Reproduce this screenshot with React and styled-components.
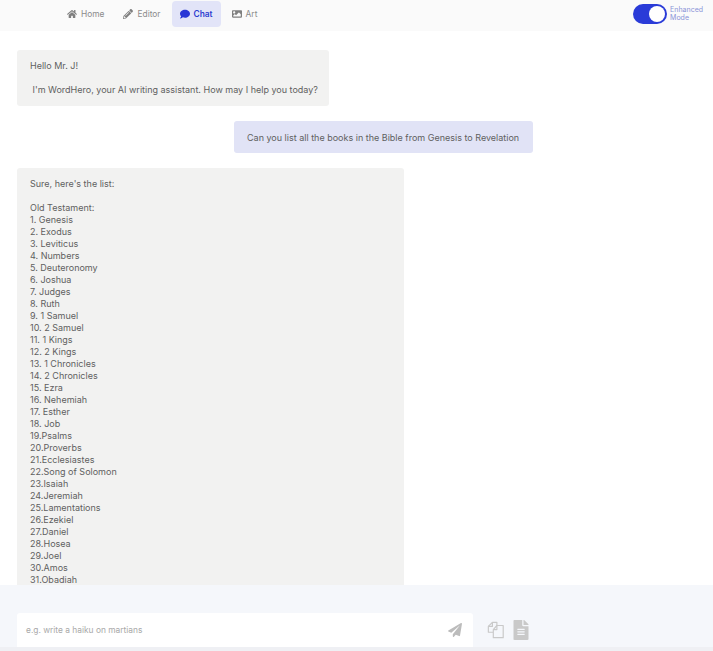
import React from 'react';
import styled, { createGlobalStyle } from 'styled-components';
import { FaHome, FaPencilAlt, FaComment, FaImage, FaPaperPlane, FaFileAlt } from 'react-icons/fa';

const GlobalStyle = createGlobalStyle`
    html, body {
        margin: 0;
        height: 100%;
        background: #ffffff;
        font-family: Inter, "Liberation Sans", sans-serif;
    }
    #root {
        height: 100%;
    }
`

const Page = styled.div`
    display: flex;
    flex-direction: column;
    height: 651px;
    overflow: hidden;
`

const Nav = styled.nav`
    display: flex;
    align-items: flex-start;
    justify-content: space-between;
    flex: none;
    height: 31px;
    padding: 1px 10px 0 59px;
    box-sizing: border-box;
    background: #fafafa;
`

const Tabs = styled.div`
    display: flex;
    gap: 3px;
`

const Tab = styled.a`
    display: flex;
    align-items: center;
    gap: 4px;
    height: 26px;
    padding: 0 8px;
    border-radius: 4px;
    background: ${props => (props.$active ? '#e2e4f8' : 'transparent')};
    color: ${props => (props.$active ? '#2f3fd0' : '#8b8b8b')};
    font-size: 8.4px;
    font-weight: ${props => (props.$active ? 600 : 400)};
    svg {
        width: 10px;
        height: 10px;
        color: ${props => (props.$active ? '#2836d6' : '#7f7f7f')};
    }
`

const Mode = styled.div`
    display: flex;
    align-items: center;
    gap: 3px;
    height: 26px;
`

const Switch = styled.div`
    display: flex;
    align-items: center;
    justify-content: flex-end;
    width: 34px;
    height: 20px;
    padding: 2px;
    box-sizing: border-box;
    border-radius: 10px;
    background: #2a3bd8;
`

const Knob = styled.span`
    width: 16px;
    height: 16px;
    border-radius: 50%;
    background: #ffffff;
`

const ModeLabel = styled.span`
    color: #8a93d8;
    font-size: 7px;
    line-height: 8px;
`

const Chat = styled.main`
    display: flex;
    flex-direction: column;
    align-items: flex-start;
    gap: 15px;
    flex: 1;
    min-height: 0;
    overflow: hidden;
    padding: 19px 0 0 17px;
`

const Bubble = styled.div`
    flex: none;
    box-sizing: border-box;
    width: ${props => props.$width}px;
    margin-left: ${props => props.$offset || 0}px;
    padding: ${props => (props.$user ? '11px 8px 9px 13px' : '10px 8px 10px 13px')};
    border-radius: 3px;
    background: ${props => (props.$user ? '#e1e3f6' : '#f2f2f1')};
    color: #5f5f5f;
    font-size: 9px;
    line-height: 12px;
    white-space: pre-wrap;
`

const Footer = styled.footer`
    display: flex;
    align-items: flex-start;
    gap: 14px;
    flex: none;
    height: 66px;
    padding: 28px 0 0 17px;
    box-sizing: border-box;
    background: #f5f7fb;
    border-bottom: 4px solid #eff0f4;
`

const InputBox = styled.div`
    display: flex;
    align-items: center;
    justify-content: space-between;
    width: 456px;
    height: 34px;
    padding: 0 11px 0 9px;
    box-sizing: border-box;
    border-radius: 3px 3px 0 0;
    background: #ffffff;
    color: #a9a9a9;
    font-size: 8.4px;
    svg {
        width: 14px;
        height: 14px;
        color: #bcbcbc;
    }
`

const FileActions = styled.div`
    display: flex;
    align-items: center;
    gap: 8px;
    height: 34px;
    color: #c9c9c9;
    svg {
        height: 20px;
    }
`

const CopyIcon = () => (
    <svg viewBox="0 0 20 20" width="18" fill="none" stroke="currentColor" strokeWidth="1.3" strokeLinejoin="round">
        <path d="M7 12.5H1.5V6L6 1.5H11V5" />
        <path d="M6 1.5V6H1.5" />
        <path d="M7 18.5V9.5L11 5H18V18.5Z" fill="#f5f7fb" />
        <path d="M11 5V9.5H7" />
    </svg>
)

const greeting = `Hello Mr. J!

 I'm WordHero, your AI writing assistant. How may I help you today?`

const books = `Sure, here's the list:

Old Testament:
1. Genesis
2. Exodus
3. Leviticus
4. Numbers
5. Deuteronomy
6. Joshua
7. Judges
8. Ruth
9. 1 Samuel
10. 2 Samuel
11. 1 Kings
12. 2 Kings
13. 1 Chronicles
14. 2 Chronicles
15. Ezra
16. Nehemiah
17. Esther
18. Job
19.Psalms
20.Proverbs
21.Ecclesiastes
22.Song of Solomon
23.Isaiah
24.Jeremiah
25.Lamentations
26.Ezekiel
27.Daniel
28.Hosea
29.Joel
30.Amos
31.Obadiah`

export default function App() {
    return (
        <Page>
            <GlobalStyle />
            <Nav>
                <Tabs>
                    <Tab><FaHome />Home</Tab>
                    <Tab><FaPencilAlt />Editor</Tab>
                    <Tab $active><FaComment />Chat</Tab>
                    <Tab><FaImage />Art</Tab>
                </Tabs>
                <Mode>
                    <Switch><Knob /></Switch>
                    <ModeLabel>Enhanced<br />Mode</ModeLabel>
                </Mode>
            </Nav>
            <Chat>
                <Bubble $width={312}>{greeting}</Bubble>
                <Bubble $user $width={299} $offset={217}>Can you list all the books in the Bible from Genesis to Revelation</Bubble>
                <Bubble $width={387}>{books}</Bubble>
            </Chat>
            <Footer>
                <InputBox>
                    e.g. write a haiku on martians
                    <FaPaperPlane />
                </InputBox>
                <FileActions>
                    <CopyIcon />
                    <FaFileAlt />
                </FileActions>
            </Footer>
        </Page>
    )
}
